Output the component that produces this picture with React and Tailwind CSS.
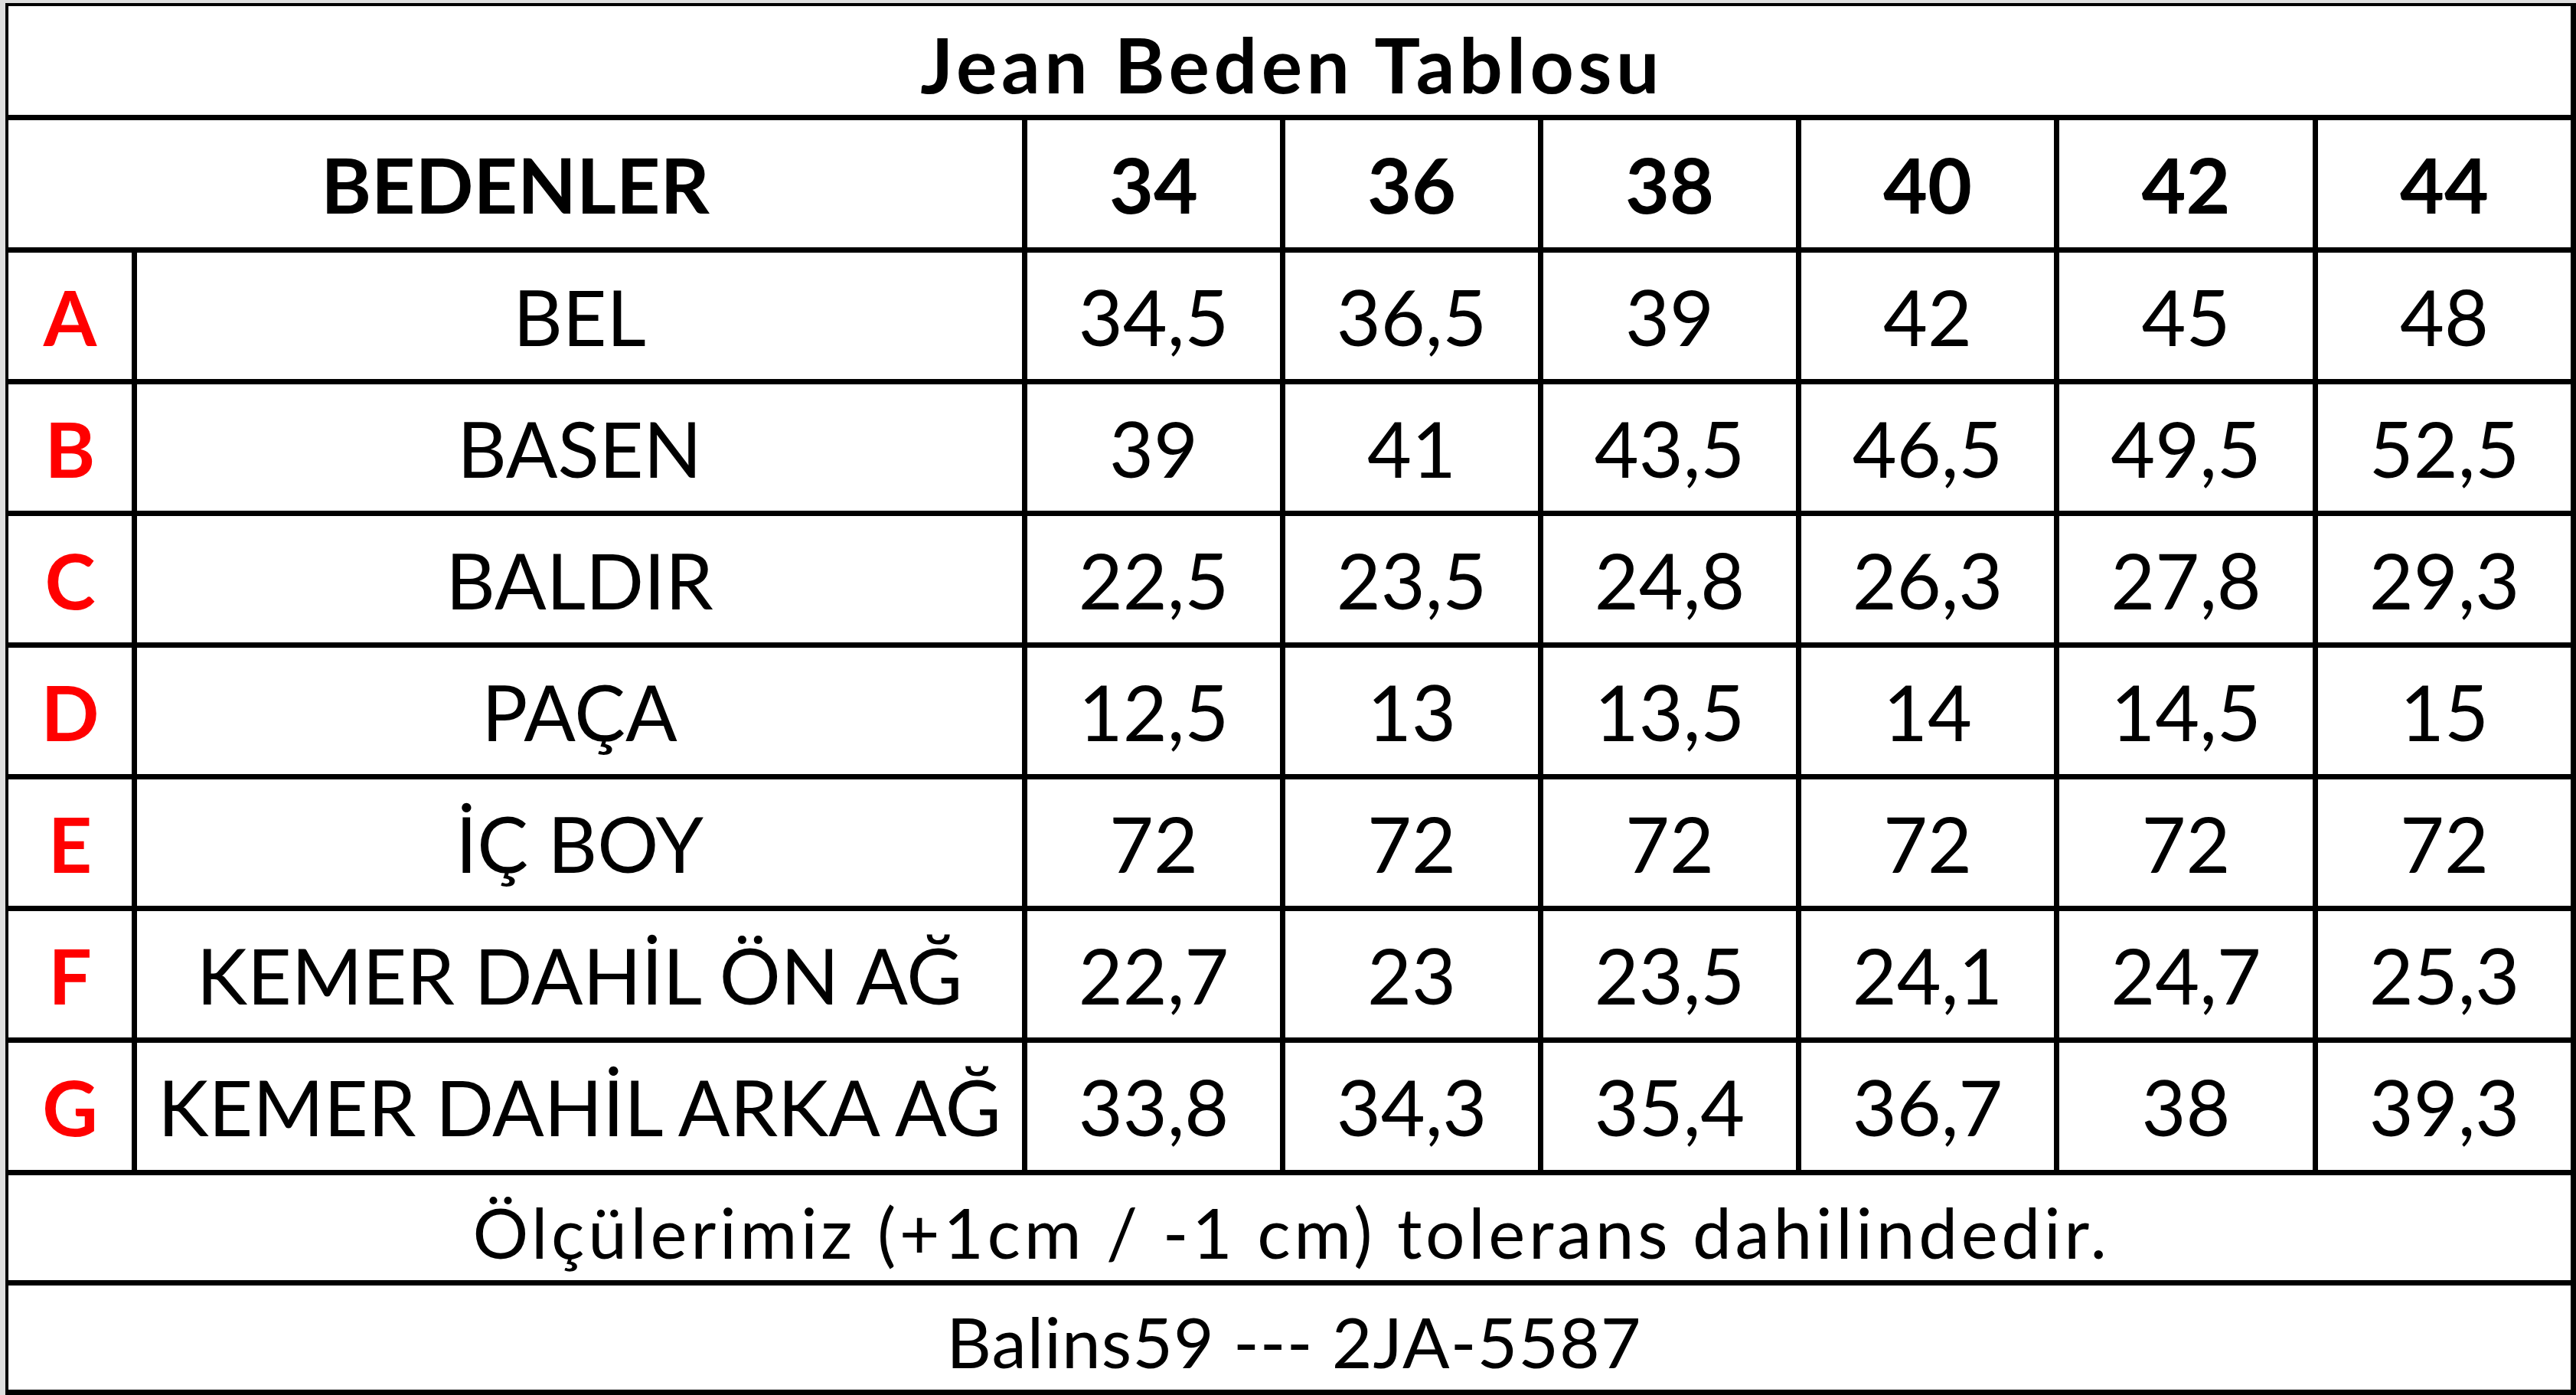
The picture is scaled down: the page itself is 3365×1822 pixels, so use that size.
import React from "react";

const sizes = ["34", "36", "38", "40", "42", "44"];
const rows = [
  ["A", "BEL", ["34,5", "36,5", "39", "42", "45", "48"]],
  ["B", "BASEN", ["39", "41", "43,5", "46,5", "49,5", "52,5"]],
  ["C", "BALDIR", ["22,5", "23,5", "24,8", "26,3", "27,8", "29,3"]],
  ["D", "PAÇA", ["12,5", "13", "13,5", "14", "14,5", "15"]],
  ["E", "İÇ BOY", ["72", "72", "72", "72", "72", "72"]],
  ["F", "KEMER DAHİL ÖN AĞ", ["22,7", "23", "23,5", "24,1", "24,7", "25,3"]],
  ["G", "KEMER DAHİL ARKA AĞ", ["33,8", "34,3", "35,4", "36,7", "38", "39,3"]],
];

function Cell({ children, className = "" }) {
  return (
    <div className={"bg-white flex items-center justify-center whitespace-nowrap " + className}>
      {children}
    </div>
  );
}

export default function App() {
  return (
    <div className="w-[3365px] h-[1822px] bg-[#dedede] pl-[7px] pt-[4px] overflow-hidden [font-family:Lato,sans-serif] text-black">
      <div className="grid bg-black gap-[7px] pl-[4px] pt-[4px] pr-[7px] pb-[7px] w-[3358px] grid-cols-[161px_1156px_330px_330px_330px_330px_331px_330px] grid-rows-[142px_166px_165px_165px_165px_165px_165px_165px_166px_137px_136px] text-[100px] leading-none">
        <Cell className="col-span-8 font-bold pt-[8px] pl-[6px] tracking-[5.5px]">Jean Beden Tablosu</Cell>
        <Cell className="col-span-2 font-bold">BEDENLER</Cell>
        {sizes.map((s) => (
          <Cell key={s} className="font-bold">{s}</Cell>
        ))}
        {rows.map(([letter, name, vals]) => (
          <React.Fragment key={letter}>
            <Cell className="font-bold text-[#ff0000]">{letter}</Cell>
            <Cell>{name}</Cell>
            {vals.map((v, i) => (
              <Cell key={i}>{v}</Cell>
            ))}
          </React.Fragment>
        ))}
        <Cell className="col-span-8 text-[91px] pt-[9px] pl-[5px] tracking-[4.6px]">Ölçülerimiz (+1cm / -1 cm) tolerans dahilindedir.</Cell>
        <Cell className="col-span-8 text-[91px] pt-[9px] pl-[12px] tracking-[1px]">Balins59 --- 2JA-5587</Cell>
      </div>
    </div>
  );
}
